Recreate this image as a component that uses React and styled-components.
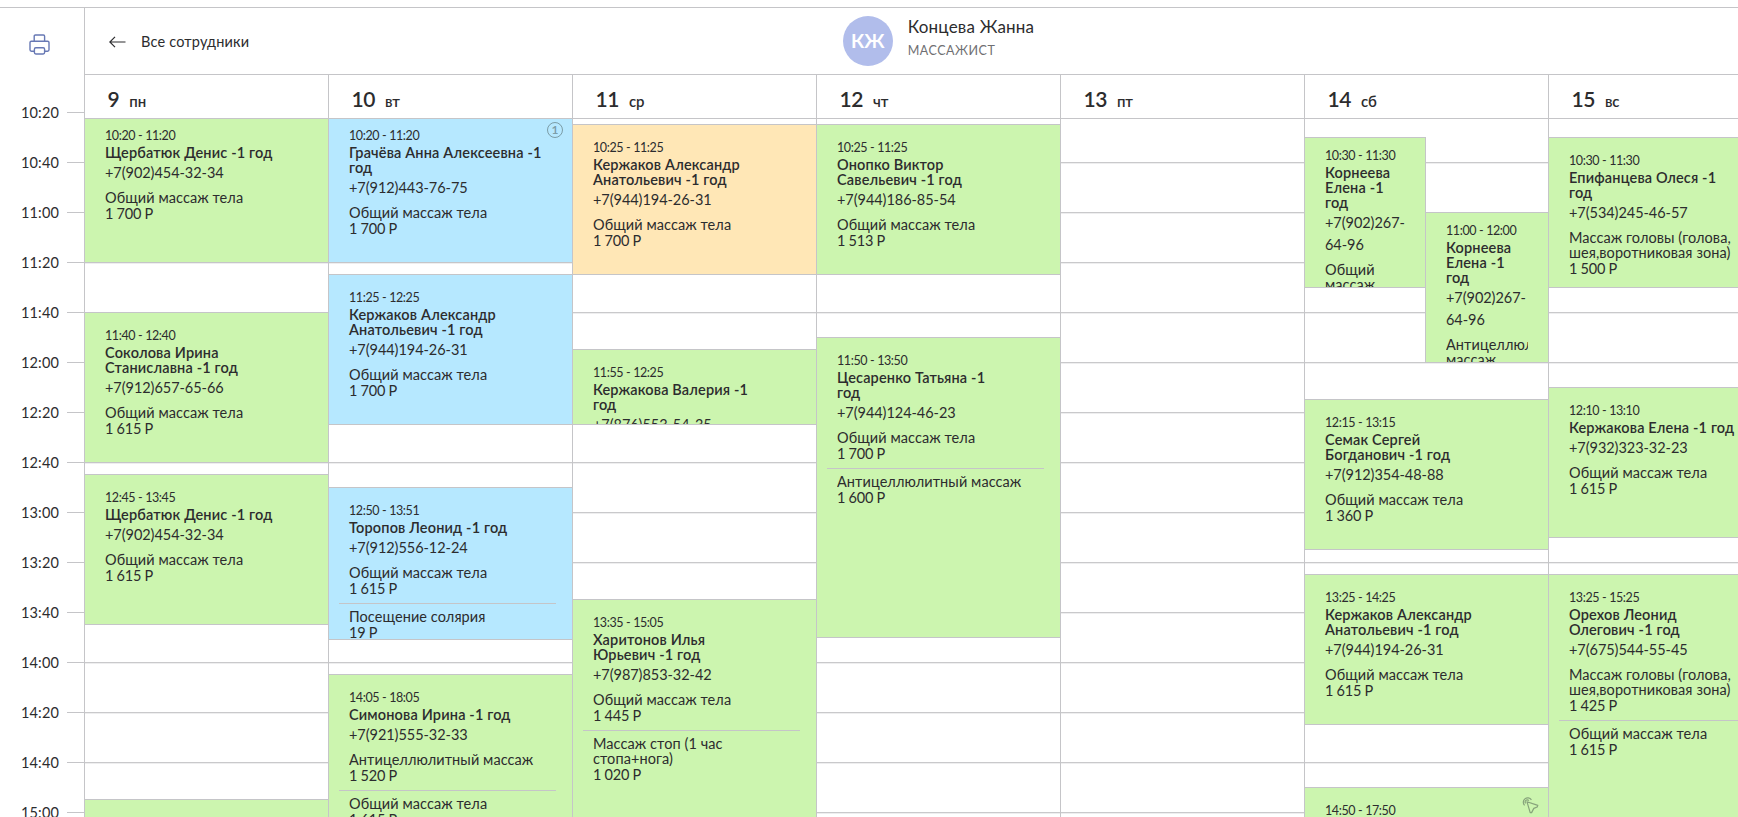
import styled, { createGlobalStyle, css } from 'styled-components';

const DAY_START = 10 * 60 + 20;
const PX_PER_MINUTE = 2.5;

const colors = {
  line: '#c5c5c8',
  text: '#2c2c2e',
  green: '#ccf5af',
  blue: '#b6e8ff',
  orange: '#ffe7b6',
};

const GlobalStyle = createGlobalStyle`
  * {
    box-sizing: border-box;
  }

  body {
    margin: 0;
    background: #ffffff;
    color: ${colors.text};
    font-family: Lato, 'Open Sans', sans-serif;
    font-size: 14.5px;
  }
`;

const Page = styled.div`
  display: flex;
  width: 100%;
  height: 817px;
  padding-top: 7px;
  overflow: hidden;
`;

const Axis = styled.aside`
  flex: none;
  width: 85px;
  height: 810px;
  overflow: hidden;
  border-top: 1px solid ${colors.line};
  border-right: 1px solid ${colors.line};
`;

const PrintButton = styled.button`
  display: flex;
  width: 100%;
  height: 79px;
  padding: 25.5px 0 0 29px;
  border: 0;
  background: none;
  color: #6778b4;
`;

const AxisRow = styled.div`
  display: flex;
  align-items: center;
  justify-content: space-between;
  height: 50px;
  padding-left: 21px;
  letter-spacing: 0.15px;
`;

const Tick = styled.span`
  width: 17px;
  height: 1px;
  margin-top: 1px;
  background: ${colors.line};
`;

const Main = styled.main`
  display: flex;
  flex: none;
  flex-direction: column;
  width: 1708px;
  height: 810px;
  border-top: 1px solid ${colors.line};
`;

const StaffHeader = styled.header`
  display: grid;
  grid-template-columns: 1fr auto 1fr;
  flex: none;
  height: 67px;
  border-bottom: 1px solid ${colors.line};
`;

const BackLink = styled.a`
  display: flex;
  align-items: center;
  gap: 15px;
  padding: 1px 0 0 24px;
  letter-spacing: 0.2px;
`;

const Staff = styled.div`
  display: flex;
  gap: 15px;
  padding: 8px 1px 0 0;
`;

const Avatar = styled.div`
  display: flex;
  align-items: center;
  justify-content: center;
  width: 50px;
  height: 50px;
  padding-bottom: 2px;
  border-radius: 50%;
  background: #b1bdeb;
  color: #ffffff;
  font-size: 19px;
  font-weight: 700;
`;

const StaffName = styled.div`
  margin-top: 1px;
  font-size: 17px;
  line-height: 20px;
  letter-spacing: 0.2px;
`;

const StaffRole = styled.div`
  margin-top: 6px;
  color: #6f6f72;
  font-size: 12.5px;
  line-height: 16px;
  letter-spacing: 0.5px;
`;

const DayHeaders = styled.div`
  display: grid;
  grid-template-columns: repeat(7, 244px);
  flex: none;
  height: 44px;
  border-bottom: 1px solid ${colors.line};
`;

const DayHeader = styled.div`
  display: flex;
  align-items: baseline;
  gap: 10px;
  padding: 12px 0 0 22.5px;
  border-right: 1px solid ${colors.line};
  line-height: 24px;
`;

const DayNumber = styled.span`
  font-size: 21px;
  font-weight: 600;
  letter-spacing: -0.5px;
`;

const Weekday = styled.span`
  font-size: 15px;
  font-weight: 600;
`;

const Board = styled.div`
  display: grid;
  grid-template-columns: repeat(7, 244px);
  flex: 1;
  min-height: 0;
  overflow: hidden;
`;

/* One grid row is one pixel of the timeline */
const DayColumn = styled.div`
  display: grid;
  grid-template-columns: 121px 122px;
  grid-auto-rows: 1px;
  height: 900px;
  margin-top: -7px;
  border-right: 1px solid ${colors.line};
  background: repeating-linear-gradient(
    to bottom,
    #c9c9cb 0 1px,
    #eeeeef 1px 2px,
    #ffffff 2px 50px
  );
`;

const EventCard = styled.article`
  position: relative;
  grid-row: ${(p) => p.$from + 1} / ${(p) => p.$to + 2};
  grid-column: 1 / -1;
  min-width: 0;
  overflow: hidden;
  padding: 15px 20px 0;
  border: solid ${colors.line};
  border-width: 1px 0;
  background: ${(p) => colors[p.$color]};
  white-space: pre;

  ${(p) =>
    p.$half &&
    css`
      grid-column: ${p.$half};
      padding-top: 10px;
    `}

  ${(p) => p.$half === 1 && 'border-right-width: 1px;'}

  ${(p) =>
    p.$half === 2 &&
    css`
      margin-left: -1px;
      border-left-width: 1px;
    `}
`;

const Time = styled.div`
  font-size: 12.5px;
  line-height: 16px;
  letter-spacing: -0.38px;
`;

const Client = styled.div`
  margin-top: 1px;
  font-weight: 600;
  line-height: 15px;
  letter-spacing: 0.16px;
`;

const Phone = styled.div`
  margin-top: 2px;
  line-height: 22px;
  letter-spacing: -0.05px;
`;

const Service = styled.div`
  overflow-x: clip;
  margin-top: ${(p) => (p.$first ? 6 : 5)}px;
  line-height: 15px;
  letter-spacing: 0.08px;
`;

const Price = styled.div`
  line-height: 17px;
  letter-spacing: -0.25px;
`;

const Divider = styled.hr`
  width: 217px;
  height: 1px;
  margin: 6px 0 0 -10px;
  border: 0;
  background: ${colors.line};
`;

const CornerMark = styled.span`
  position: absolute;
  top: 9px;
  right: 9px;
  display: flex;
  color: rgba(50, 65, 60, 0.45);
`;

const VisitCount = styled.span`
  width: 16px;
  height: 16px;
  border: 1px solid currentColor;
  border-radius: 50%;
  font-size: 12px;
  font-weight: 700;
  line-height: 14px;
  text-align: center;
`;

const PrinterIcon = () => (
  <svg width="21" height="21" viewBox="0 0 21 21" fill="none" stroke="currentColor" strokeWidth="1.4">
    <path d="M5.2 7.2V2.2A1.2 1.2 0 0 1 6.4 1h8a1.2 1.2 0 0 1 1.2 1.2v5" />
    <path d="M5.2 17.2H2.4A1.4 1.4 0 0 1 1 15.8V8.6a1.4 1.4 0 0 1 1.4-1.4h16.2A1.4 1.4 0 0 1 20 8.6v7.2a1.4 1.4 0 0 1-1.4 1.4h-2.8" />
    <rect x="5.4" y="13.8" width="10.2" height="6.2" rx="1.4" />
  </svg>
);

const ArrowIcon = () => (
  <svg width="17" height="12" viewBox="0 0 17 12" fill="none" stroke="currentColor" strokeWidth="1.2">
    <path d="M16.5 6H1M6 .8.8 6 6 11.2" />
  </svg>
);

const PointerIcon = () => (
  <svg width="17" height="17" viewBox="0 0 17 17" fill="none" stroke="currentColor" strokeWidth="1.2" strokeLinejoin="round">
    <path d="M5 4.8 15.8 8.4 15.2 10 11.8 11.4 9.6 15.6 8.2 15.6Z" />
    <path d="M2.6 8.4A4.4 4.4 0 1 1 9.4 2.9" />
    <path d="M3.6 6.3A2 2 0 0 1 6.8 3.6" />
  </svg>
);

const MASSAGE = 'Общий массаж тела';
const HEAD = 'Массаж головы (голова,\nшея,воротниковая зона)';

const days = [
  {
    number: 9,
    weekday: 'пн',
    events: [
      { start: '10:20', end: '11:20', client: 'Щербатюк Денис -1 год', phone: '+7(902)454-32-34', services: [[MASSAGE, '1 700 Р']] },
      { start: '11:40', end: '12:40', client: 'Соколова Ирина\nСтаниславна -1 год', phone: '+7(912)657-65-66', services: [[MASSAGE, '1 615 Р']] },
      { start: '12:45', end: '13:45', client: 'Щербатюк Денис -1 год', phone: '+7(902)454-32-34', services: [[MASSAGE, '1 615 Р']] },
      { start: '14:55', end: '15:55', blank: true },
    ],
  },
  {
    number: 10,
    weekday: 'вт',
    events: [
      { start: '10:20', end: '11:20', color: 'blue', mark: 'count', client: 'Грачёва Анна Алексеевна -1\nгод', phone: '+7(912)443-76-75', services: [[MASSAGE, '1 700 Р']] },
      { start: '11:25', end: '12:25', color: 'blue', client: 'Кержаков Александр\nАнатольевич -1 год', phone: '+7(944)194-26-31', services: [[MASSAGE, '1 700 Р']] },
      { start: '12:50', end: '13:51', color: 'blue', client: 'Торопов Леонид -1 год', phone: '+7(912)556-12-24', services: [[MASSAGE, '1 615 Р'], ['Посещение солярия', '19 Р']] },
      { start: '14:05', end: '18:05', client: 'Симонова Ирина -1 год', phone: '+7(921)555-32-33', services: [['Антицеллюлитный массаж', '1 520 Р'], [MASSAGE, '1 615 Р']] },
    ],
  },
  {
    number: 11,
    weekday: 'ср',
    events: [
      { start: '10:25', end: '11:25', color: 'orange', client: 'Кержаков Александр\nАнатольевич -1 год', phone: '+7(944)194-26-31', services: [[MASSAGE, '1 700 Р']] },
      { start: '11:55', end: '12:25', client: 'Кержакова Валерия -1\nгод', phone: '+7(876)553-54-35', services: [] },
      { start: '13:35', end: '15:05', client: 'Харитонов Илья\nЮрьевич -1 год', phone: '+7(987)853-32-42', services: [[MASSAGE, '1 445 Р'], ['Массаж стоп (1 час\nстопа+нога)', '1 020 Р']] },
    ],
  },
  {
    number: 12,
    weekday: 'чт',
    events: [
      { start: '10:25', end: '11:25', client: 'Онопко Виктор\nСавельевич -1 год', phone: '+7(944)186-85-54', services: [[MASSAGE, '1 513 Р']] },
      { start: '11:50', end: '13:50', client: 'Цесаренко Татьяна -1\nгод', phone: '+7(944)124-46-23', services: [[MASSAGE, '1 700 Р'], ['Антицеллюлитный массаж', '1 600 Р']] },
    ],
  },
  { number: 13, weekday: 'пт', events: [] },
  {
    number: 14,
    weekday: 'сб',
    events: [
      { start: '10:30', end: '11:30', half: 1, client: 'Корнеева\nЕлена -1\nгод', phone: '+7(902)267-\n64-96', services: [['Общий\nмассаж', '']] },
      { start: '11:00', end: '12:00', half: 2, client: 'Корнеева\nЕлена -1\nгод', phone: '+7(902)267-\n64-96', services: [['Антицеллюлитный\nмассаж', '']] },
      { start: '12:15', end: '13:15', client: 'Семак Сергей\nБогданович -1 год', phone: '+7(912)354-48-88', services: [[MASSAGE, '1 360 Р']] },
      { start: '13:25', end: '14:25', client: 'Кержаков Александр\nАнатольевич -1 год', phone: '+7(944)194-26-31', services: [[MASSAGE, '1 615 Р']] },
      { start: '14:50', end: '17:50', mark: 'pointer', services: [] },
    ],
  },
  {
    number: 15,
    weekday: 'вс',
    events: [
      { start: '10:30', end: '11:30', client: 'Епифанцева Олеся -1\nгод', phone: '+7(534)245-46-57', services: [[HEAD, '1 500 Р']] },
      { start: '12:10', end: '13:10', client: 'Кержакова Елена -1 год', phone: '+7(932)323-32-23', services: [[MASSAGE, '1 615 Р']] },
      { start: '13:25', end: '15:25', client: 'Орехов Леонид\nОлегович -1 год', phone: '+7(675)544-55-45', services: [[HEAD, '1 425 Р'], [MASSAGE, '1 615 Р']] },
    ],
  },
];

const toOffset = (time) => {
  const [hours, minutes] = time.split(':').map(Number);
  return Math.floor((hours * 60 + minutes - DAY_START) * PX_PER_MINUTE);
};

const axisLabels = Array.from({ length: 15 }, (_, i) => {
  const total = DAY_START + i * 20;
  return `${Math.floor(total / 60)}:${String(total % 60).padStart(2, '0')}`;
});

function Event({ event }) {
  const { start, end, color = 'green', half, mark, blank, client, phone, services } = event;

  return (
    <EventCard $from={toOffset(start)} $to={toOffset(end)} $color={color} $half={half}>
      {mark && (
        <CornerMark>{mark === 'count' ? <VisitCount>1</VisitCount> : <PointerIcon />}</CornerMark>
      )}
      {!blank && (
        <>
          <Time>{`${start} - ${end}`}</Time>
          {client && <Client>{client}</Client>}
          {phone && <Phone>{phone}</Phone>}
          {services.map(([name, price], index) => (
            <div key={index}>
              {index > 0 && <Divider />}
              <Service $first={index === 0}>{name}</Service>
              {price && <Price>{price}</Price>}
            </div>
          ))}
        </>
      )}
    </EventCard>
  );
}

export default function App() {
  return (
    <>
      <GlobalStyle />
      <Page>
        <Axis>
          <PrintButton>
            <PrinterIcon />
          </PrintButton>
          {axisLabels.map((label) => (
            <AxisRow key={label}>
              {label}
              <Tick />
            </AxisRow>
          ))}
        </Axis>
        <Main>
          <StaffHeader>
            <BackLink>
              <ArrowIcon />
              Все сотрудники
            </BackLink>
            <Staff>
              <Avatar>КЖ</Avatar>
              <div>
                <StaffName>Концева Жанна</StaffName>
                <StaffRole>МАССАЖИСТ</StaffRole>
              </div>
            </Staff>
          </StaffHeader>
          <DayHeaders>
            {days.map((day) => (
              <DayHeader key={day.number}>
                <DayNumber>{day.number}</DayNumber>
                <Weekday>{day.weekday}</Weekday>
              </DayHeader>
            ))}
          </DayHeaders>
          <Board>
            {days.map((day) => (
              <DayColumn key={day.number}>
                {day.events.map((event) => (
                  <Event key={event.start} event={event} />
                ))}
              </DayColumn>
            ))}
          </Board>
        </Main>
      </Page>
    </>
  );
}
